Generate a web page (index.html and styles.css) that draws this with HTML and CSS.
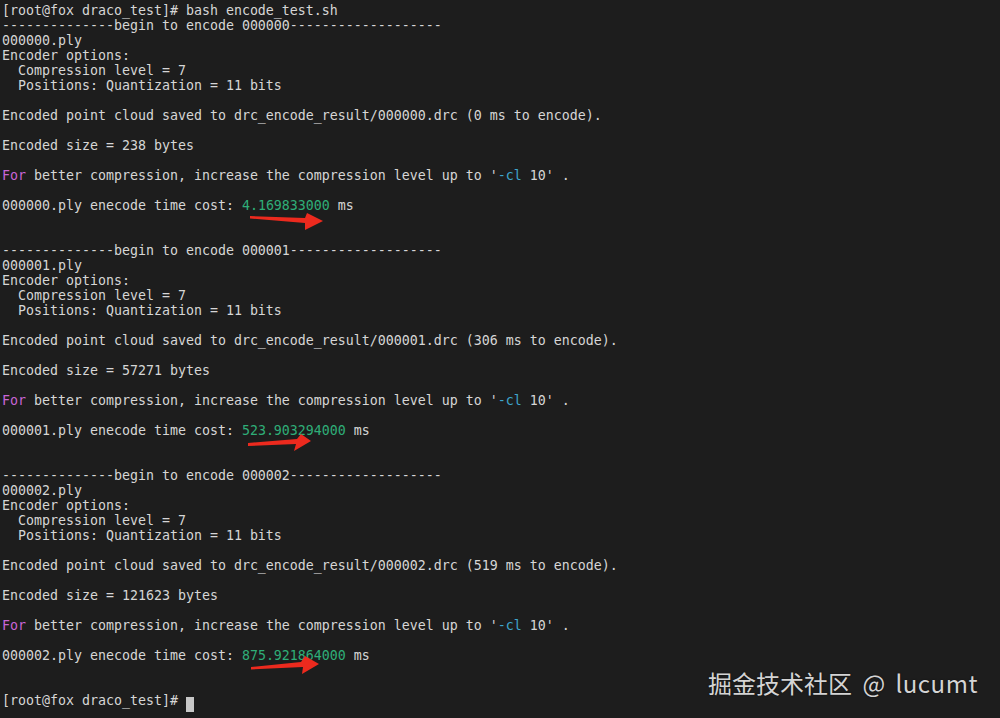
FILE: index.html
```html
<!DOCTYPE html>
<html>
<head>
<meta charset="utf-8">
<link rel="stylesheet" href="styles.css">
</head>
<body>
<div class="term">
<pre class="out">[root@fox draco_test]# bash encode_test.sh
--------------begin to encode 000000-------------------
000000.ply
Encoder options:
  Compression level = 7
  Positions: Quantization = 11 bits

Encoded point cloud saved to drc_encode_result/000000.drc (0 ms to encode).

Encoded size = 238 bytes

<span class="kw">For</span> better compression, increase the compression level up to '<span class="opt">-cl</span> 10' .

000000.ply enecode time cost: <span class="num">4.169833000</span> ms


--------------begin to encode 000001-------------------
000001.ply
Encoder options:
  Compression level = 7
  Positions: Quantization = 11 bits

Encoded point cloud saved to drc_encode_result/000001.drc (306 ms to encode).

Encoded size = 57271 bytes

<span class="kw">For</span> better compression, increase the compression level up to '<span class="opt">-cl</span> 10' .

000001.ply enecode time cost: <span class="num">523.903294000</span> ms


--------------begin to encode 000002-------------------
000002.ply
Encoder options:
  Compression level = 7
  Positions: Quantization = 11 bits

Encoded point cloud saved to drc_encode_result/000002.drc (519 ms to encode).

Encoded size = 121623 bytes

<span class="kw">For</span> better compression, increase the compression level up to '<span class="opt">-cl</span> 10' .

000002.ply enecode time cost: <span class="num">875.921864000</span> ms


[root@fox draco_test]# <span class="cursor"> </span></pre>
<svg class="arrows" width="1000" height="718" viewBox="0 0 1000 718">
  <polygon fill="#ec2a1e" points="250,216 305,218 307,213 323,221 305,230 305,223 250,218.5"/>
  <polygon fill="#ec2a1e" points="248,443 297,439 301,434 311,441 294,451 296,444 248,446"/>
  <polygon fill="#ec2a1e" points="251,667 301,662 305,656 319,664 302,674 303,667 251,669.5"/>
</svg>
<div class="mark">掘金技术社区 @ <span class="user">lucumt</span></div>
</div>
</body>
</html>
```
FILE: styles.css
```css
html, body {
  margin: 0;
  padding: 0;
  background: #1d1d1d;
}
.term {
  position: relative;
  width: 1000px;
  height: 718px;
  overflow: hidden;
  background: #1d1d1d;
}
.out {
  margin: 0;
  padding: 3px 0 0 2px;
  font-family: "DejaVu Sans Mono", "Liberation Mono", monospace;
  font-size: 13.29px;
  line-height: 15px;
  color: #d6d6d6;
  white-space: pre;
}
.kw { color: #c865d6; }
.opt { color: #3ea6cc; }
.num { color: #2fae78; }
.cursor {
  display: inline-block;
  width: 8px;
  height: 15px;
  background: #c8c8c8;
  vertical-align: -4px;
}
.arrows {
  position: absolute;
  left: 0;
  top: 0;
}
.mark {
  position: absolute;
  left: 708px;
  top: 668px;
  font-family: "Noto Sans CJK SC", "Noto Sans", sans-serif;
  font-size: 24px;
  line-height: 30px;
  color: #d4d4d4;
  word-spacing: 5px;
  text-shadow: 0 0 2px rgba(0,0,0,0.6);
  white-space: nowrap;
}
.user {
  letter-spacing: 0.5px;
}
```
